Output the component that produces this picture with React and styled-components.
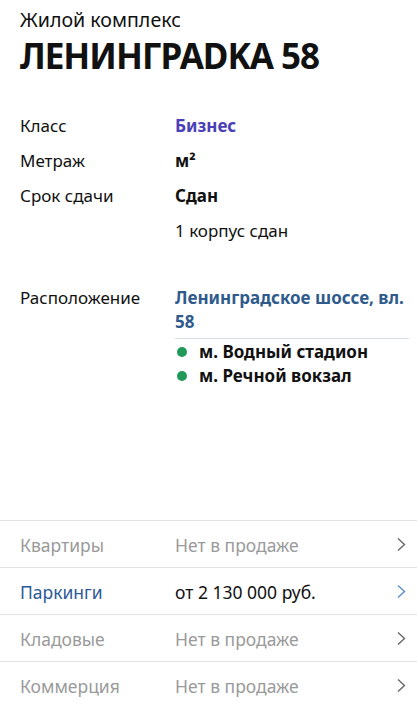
import React from "react";
import styled, { createGlobalStyle } from "styled-components";

const GlobalStyle = createGlobalStyle`
  html, body {
    margin: 0;
    padding: 0;
    background: #fff;
  }
  body {
    font-family: "Noto Sans", "Open Sans", sans-serif;
    color: #111;
  }
`;

const Page = styled.div`
  width: 417px;
  height: 707px;
  display: flex;
  flex-direction: column;
  overflow: hidden;
`;

const Header = styled.header`
  padding: 6px 20px 0;
`;

const Kind = styled.div`
  font-size: 19.6px;
  line-height: 28px;
`;

const Title = styled.h1`
  margin: 0;
  font-size: 35px;
  line-height: 44px;
  font-weight: 700;
  letter-spacing: -1px;
`;

const Specs = styled.div`
  padding: 30px 8px 0 20px;
  display: grid;
  grid-template-columns: 155px 1fr;
`;

const Label = styled.div`
  font-size: 17px;
  line-height: 35px;
`;

const Value = styled.div`
  font-size: 17px;
  line-height: 35px;
  font-weight: ${(p) => (p.$bold ? 700 : 400)};
  color: ${(p) => p.$color || "#111"};
`;

const Spacer = styled.div`
  height: ${(p) => p.$h}px;
  grid-column: 1 / -1;
`;

const Address = styled.div`
  font-size: 17px;
  line-height: 24px;
  font-weight: 700;
  color: #2f5b8c;
  padding: 4px 0 4px;
  border-bottom: 1px solid #d6e0ea;
`;

const LocLabel = styled(Label)`
  line-height: 24px;
  padding-top: 4px;
`;

const MetroList = styled.ul`
  list-style: none;
  margin: 0;
  padding: 1px 0 0 2px;
`;

const Metro = styled.li`
  display: flex;
  align-items: center;
  gap: 12px;
  font-size: 17px;
  line-height: 24px;
  font-weight: 700;

  &::before {
    content: "";
    width: 10px;
    height: 10px;
    border-radius: 50%;
    background: #1f9a5b;
  }
`;

const Offers = styled.div`
  margin-top: auto;
  margin-bottom: -1px;
`;

const Offer = styled.div`
  display: grid;
  grid-template-columns: 155px 1fr 12px;
  align-items: center;
  padding: 1px 9px 0 20px;
  box-sizing: border-box;
  height: 47px;
  border-top: 1px solid #e2e2e2;
  font-size: 17.5px;
`;

const OfferName = styled.span`
  color: ${(p) => (p.$active ? "#2b5a98" : "#9a9a9a")};
`;

const OfferPrice = styled.span`
  color: ${(p) => (p.$active ? "#111" : "#9a9a9a")};
`;

const Chevron = ({ color }) => (
  <svg width="11" height="15" viewBox="0 0 11 15" fill="none">
    <path d="M2 1.5l6.5 6-6.5 6" stroke={color} strokeWidth="1.4" />
  </svg>
);

const offers = [
  { name: "Квартиры", price: "Нет в продаже" },
  { name: "Паркинги", price: "от 2 130 000 руб.", active: true },
  { name: "Кладовые", price: "Нет в продаже" },
  { name: "Коммерция", price: "Нет в продаже" },
];

export default function App() {
  return (
    <>
      <GlobalStyle />
      <Page>
        <Header>
          <Kind>Жилой комплекс</Kind>
          <Title>ЛЕНИНГРАDKA 58</Title>
        </Header>
        <Specs>
          <Label>Класс</Label>
          <Value $bold $color="#4a40b8">Бизнес</Value>
          <Label>Метраж</Label>
          <Value $bold>м²</Value>
          <Label>Срок сдачи</Label>
          <Value $bold>Сдан</Value>
          <Label />
          <Value>1 корпус сдан</Value>
          <Spacer $h={34} />
          <LocLabel>Расположение</LocLabel>
          <div>
            <Address>Ленинградское шоссе, вл. 58</Address>
            <MetroList>
              <Metro>м. Водный стадион</Metro>
              <Metro>м. Речной вокзал</Metro>
            </MetroList>
          </div>
        </Specs>
        <Offers>
          {offers.map((o) => (
            <Offer key={o.name}>
              <OfferName $active={o.active}>{o.name}</OfferName>
              <OfferPrice $active={o.active}>{o.price}</OfferPrice>
              <Chevron color={o.active ? "#5b8fd0" : "#666"} />
            </Offer>
          ))}
        </Offers>
      </Page>
    </>
  );
}
